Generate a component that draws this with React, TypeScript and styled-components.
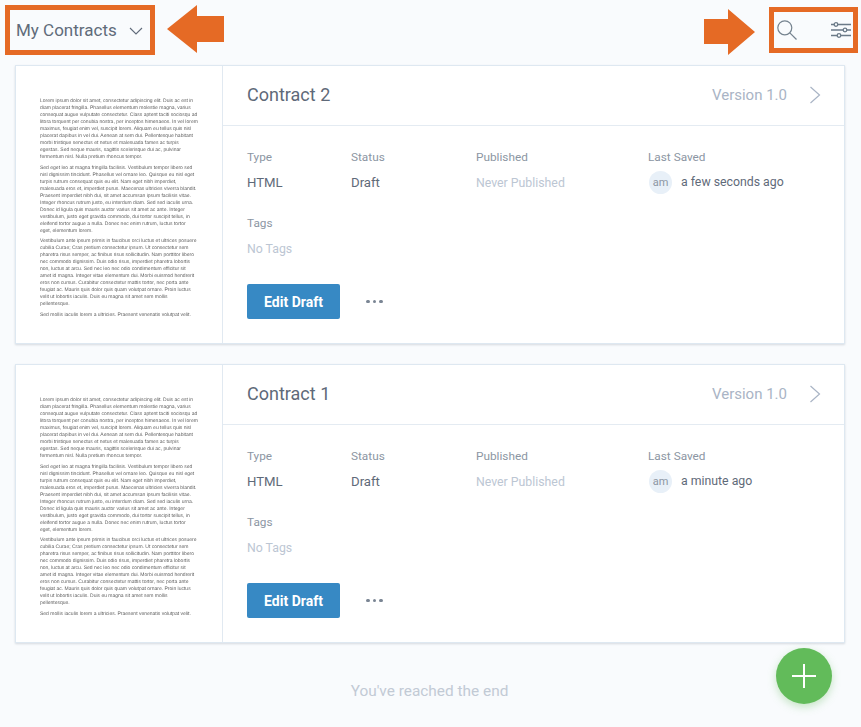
import React from "react";
import styled, { createGlobalStyle } from "styled-components";

const GlobalStyle = createGlobalStyle`
  html, body {
    margin: 0;
    height: 100%;
    overflow: hidden;
    background-color: #f9fbfd;
    font-family: Roboto, "Liberation Sans", sans-serif;
  }
`;

const Page = styled.div`
  width: 861px;
  height: 727px;
  box-sizing: border-box;
  padding: 5px 3px 0 5px;
  position: relative;
  overflow: hidden;
`;

const TopBar = styled.header`
  display: flex;
  align-items: flex-start;
  height: 60px;
`;

const Dropdown = styled.div`
  box-sizing: border-box;
  width: 150px;
  height: 50px;
  border: 5px solid #e56a25;
  display: flex;
  align-items: center;
  padding-left: 6px;
  gap: 12px;
  font-size: 17px;
  color: #606b7a;
`;

const Caret = styled.svg`
  display: block;
  margin-top: 2px;
`;

const Arrow = styled.svg<{ $gap: number; $top?: number }>`
  display: block;
  margin-left: ${(p) => p.$gap}px;
  margin-top: ${(p) => p.$top ?? 0}px;
  flex: none;
`;

const Spacer = styled.div`
  flex: 1;
`;

const ToolBox = styled.div`
  box-sizing: border-box;
  width: 89px;
  height: 46px;
  margin: 2px 0 0 14px;
  border: 5px solid #e56a25;
  display: flex;
  align-items: center;
  justify-content: space-between;
  padding: 0 2px 0 2.5px;
`;

const List = styled.main`
  display: flex;
  flex-direction: column;
  gap: 20px;
  margin: 0 13px 0 10px;
`;

const Card = styled.article`
  box-sizing: border-box;
  height: 279px;
  display: flex;
  background: #fff;
  border: 1px solid #dee8f1;
  box-shadow: 0 1px 2px rgba(90, 105, 125, 0.22);
`;

const Thumb = styled.div`
  box-sizing: border-box;
  width: 207px;
  flex: none;
  padding: 32px 0 0 24px;
  border-right: 1px solid #e1e9f1;
  font-family: "Liberation Sans", Arial, sans-serif;
  font-size: 5px;
  line-height: 7px;
  color: #5f5f5f;
  text-rendering: geometricPrecision;
  white-space: nowrap;
  will-change: transform;
`;

const ThumbPara = styled.p`
  margin: 0 0 3.6px;
`;

const ThumbLine = styled.span`
  display: block;
`;

const Content = styled.div`
  flex: 1;
  min-width: 0;
  display: flex;
  flex-direction: column;
`;

const CardHeader = styled.div`
  box-sizing: border-box;
  height: 60px;
  display: flex;
  align-items: center;
  padding: 0 23px 2px 24px;
  border-bottom: 1px solid #e4ebf2;
`;

const Title = styled.h2`
  margin: 0;
  flex: 1;
  font-size: 18px;
  font-weight: 400;
  color: #5f6a79;
`;

const Version = styled.span`
  font-size: 15px;
  color: #a9b4c5;
  margin-right: 22px;
`;

const Body = styled.div`
  padding: 23px 24px 0;
`;

const Fields = styled.div`
  display: grid;
  grid-template-columns: 104px 125px 172px 1fr;
`;

const Field = styled.div`
  display: flex;
  flex-direction: column;
`;

const Label = styled.span`
  font-size: 11.8px;
  line-height: 16px;
  color: #8c96a3;
`;

const Value = styled.span<{ $muted?: boolean; $large?: boolean }>`
  box-sizing: border-box;
  margin-top: 5px;
  height: 24px;
  padding-top: ${(p) => (p.$muted ? "2px" : "0")};
  display: flex;
  align-items: center;
  font-size: ${(p) => (p.$large ? "13.2px" : "12.3px")};
  color: ${(p) => (p.$muted ? "#bcc6d3" : "#5f6a79")};
`;

const Avatar = styled.span`
  width: 23px;
  height: 23px;
  margin: 0 9px 0 1px;
  border-radius: 50%;
  background: #e8f0f8;
  color: #8c96a3;
  font-size: 11px;
  display: flex;
  align-items: center;
  justify-content: center;
`;

const TagsField = styled(Field)`
  margin-top: 21px;
`;

const Actions = styled.div`
  display: flex;
  align-items: center;
  margin-top: 24px;
  gap: 26px;
`;

const EditButton = styled.button`
  width: 93px;
  height: 35px;
  padding: 0;
  border: none;
  border-radius: 2px;
  background: #3789c4;
  color: #fff;
  font-family: inherit;
  font-size: 14px;
  font-weight: 700;
`;

const Dots = styled.span`
  display: flex;
  gap: 3px;
`;

const Dot = styled.i`
  width: 3.5px;
  height: 3.5px;
  border-radius: 50%;
  background: #7a8594;
`;

const EndNote = styled.p`
  margin: 39px 4px 0 0;
  text-align: center;
  font-size: 15.4px;
  color: #c2cad5;
`;

const Fab = styled.button`
  position: absolute;
  left: 776px;
  top: 648px;
  width: 56px;
  height: 56px;
  padding: 0;
  border: none;
  border-radius: 50%;
  background: #62bb5a;
  box-shadow: 0 3px 8px rgba(98, 187, 90, 0.35);
  display: flex;
  align-items: center;
  justify-content: center;
`;

// the preview is a shrunken page, so its lines break where the page broke them
const lorem = [
  [
    "Lorem ipsum dolor sit amet, consectetur adipiscing elit. Duis ac est in",
    "diam placerat fringilla. Phasellus elementum molestie magna, varius",
    "consequat augue vulputate consectetur. Class aptent taciti sociosqu ad",
    "litora torquent per conubia nostra, per inceptos himenaeos. In vel lorem",
    "maximus, feugiat enim vel, suscipit lorem. Aliquam eu tellus quis nisl",
    "placerat dapibus in vel dui. Aenean at sem dui. Pellentesque habitant",
    "morbi tristique senectus et netus et malesuada fames ac turpis",
    "egestas. Sed neque mauris, sagittis scelerisque dui ac, pulvinar",
    "fermentum nisl. Nulla pretium rhoncus tempor.",
  ],
  [
    "Sed eget leo at magna fringilla facilisis. Vestibulum tempor libero sed",
    "nisl dignissim tincidunt. Phasellus vel ornare leo. Quisque eu nisl eget",
    "turpis rutrum consequat quis eu elit. Nam eget nibh imperdiet,",
    "malesuada eros et, imperdiet purus. Maecenas ultricies viverra blandit.",
    "Praesent imperdiet nibh dui, sit amet accumsan ipsum facilisis vitae.",
    "Integer rhoncus rutrum justo, eu interdum diam. Sed sed iaculis urna.",
    "Donec id ligula quis mauris auctor varius sit amet ac ante. Integer",
    "vestibulum, justo eget gravida commodo, dui tortor suscipit tellus, in",
    "eleifend tortor augue a nulla. Donec nec enim rutrum, luctus tortor",
    "eget, elementum lorem.",
  ],
  [
    "Vestibulum ante ipsum primis in faucibus orci luctus et ultrices posuere",
    "cubilia Curae; Cras pretium consectetur ipsum. Ut consectetur sem",
    "pharetra risus semper, ac finibus risus sollicitudin. Nam porttitor libero",
    "nec commodo dignissim. Duis odio risus, imperdiet pharetra lobortis",
    "non, luctus at arcu. Sed nec leo nec odio condimentum efficitur sit",
    "amet id magna. Integer vitae elementum dui. Morbi euismod hendrerit",
    "eros non cursus. Curabitur consectetur mattis tortor, nec porta ante",
    "feugiat ac. Mauris quis dolor quis quam volutpat ornare. Proin luctus",
    "velit ut lobortis iaculis. Duis eu magna sit amet sem mollis",
    "pellentesque.",
  ],
  ["Sed mollis iaculis lorem a ultricies. Praesent venenatis volutpat velit."],
];

const contracts = [
  { name: "Contract 2", saved: "a few seconds ago" },
  { name: "Contract 1", saved: "a minute ago" },
];

const ContractCard: React.FC<{ name: string; saved: string }> = ({ name, saved }) => (
  <Card>
    <Thumb>
      {lorem.map((lines) => (
        <ThumbPara key={lines[0]}>
          {lines.map((line) => (
            <ThumbLine key={line}>{line}</ThumbLine>
          ))}
        </ThumbPara>
      ))}
    </Thumb>
    <Content>
      <CardHeader>
        <Title>{name}</Title>
        <Version>Version 1.0</Version>
        <svg width="12" height="18" viewBox="0 0 12 18" fill="none" stroke="#a9b4c5" strokeWidth="1.2">
          <path d="M1.5 1l9 8-9 8" />
        </svg>
      </CardHeader>
      <Body>
        <Fields>
          <Field>
            <Label>Type</Label>
            <Value $large>HTML</Value>
          </Field>
          <Field>
            <Label>Status</Label>
            <Value $large>Draft</Value>
          </Field>
          <Field>
            <Label>Published</Label>
            <Value $muted>Never Published</Value>
          </Field>
          <Field>
            <Label>Last Saved</Label>
            <Value>
              <Avatar>am</Avatar>
              {saved}
            </Value>
          </Field>
        </Fields>
        <TagsField>
          <Label>Tags</Label>
          <Value $muted>No Tags</Value>
        </TagsField>
        <Actions>
          <EditButton>Edit Draft</EditButton>
          <Dots>
            <Dot />
            <Dot />
            <Dot />
          </Dots>
        </Actions>
      </Body>
    </Content>
  </Card>
);

const App: React.FC = () => (
  <Page>
    <GlobalStyle />
    <TopBar>
      <Dropdown>
        My Contracts
        <Caret width="14" height="8" viewBox="0 0 14 8" fill="none" stroke="#606b7a" strokeWidth="1.1">
          <path d="M1 1l6 6 6-6" />
        </Caret>
      </Dropdown>
      <Arrow $gap={12} width="57" height="48" viewBox="0 0 57 48">
        <path d="M0 24L30 0V11H57V37H30V48Z" fill="#e56a25" />
      </Arrow>
      <Spacer />
      <Arrow $gap={0} $top={4} width="51" height="46" viewBox="0 0 51 46">
        <path d="M51 23L24 0V10H0V35H24V46Z" fill="#e56a25" />
      </Arrow>
      <ToolBox>
        <svg width="20" height="20" viewBox="0 0 20 20" fill="none" stroke="#75838f" strokeWidth="1.2">
          <circle cx="7.8" cy="7.8" r="7" />
          <path d="M12.8 12.8l6.7 6.7" />
        </svg>
        <svg width="20" height="16" viewBox="0 0 20 16" fill="none" stroke="#6b7a88" strokeWidth="1.3">
          <path d="M0 2.5h3.2M6.8 2.5H20M0 8h12.2M15.8 8H20M0 13.5h6.2M9.8 13.5H20" />
          <circle cx="5" cy="2.5" r="1.8" />
          <circle cx="14" cy="8" r="1.8" />
          <circle cx="8" cy="13.5" r="1.8" />
        </svg>
      </ToolBox>
    </TopBar>
    <List>
      {contracts.map((c) => (
        <ContractCard key={c.name} name={c.name} saved={c.saved} />
      ))}
    </List>
    <EndNote>You've reached the end</EndNote>
    <Fab>
      <svg width="24" height="24" viewBox="0 0 24 24" stroke="#fff" strokeWidth="2">
        <path d="M12 0v24M0 12h24" />
      </svg>
    </Fab>
  </Page>
);

export default App;
